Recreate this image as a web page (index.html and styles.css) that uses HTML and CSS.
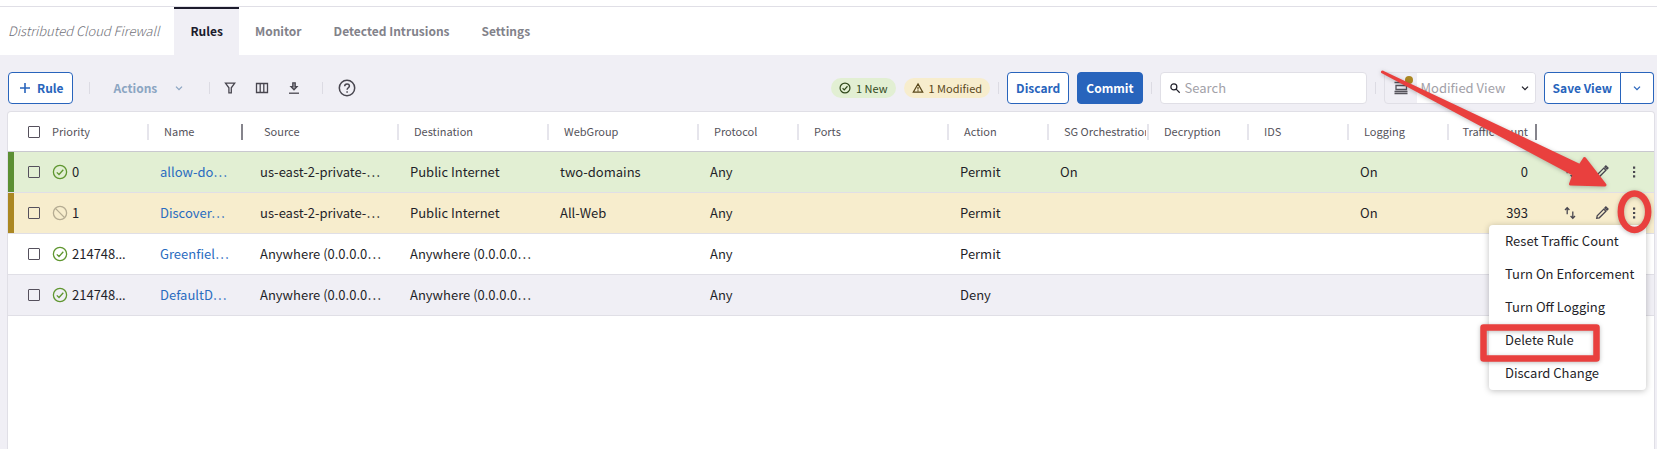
FILE: index.html
```html
<!DOCTYPE html>
<html lang="en">
<head>
<meta charset="utf-8">
<meta name="viewport" content="width=device-width, initial-scale=1">
<title>Distributed Cloud Firewall</title>
<link rel="stylesheet" href="styles.css">
</head>
<body>
<svg class="sprite" aria-hidden="true">
  <symbol id="i-check" viewBox="0 0 16 16"><circle cx="8" cy="8" r="6.6"/><path d="M4.8 8.4l2.2 2.1 4.3-4.8"/></symbol>
  <symbol id="i-block" viewBox="0 0 16 16"><circle cx="8" cy="8" r="6.6"/><path d="M3.4 3.4l9.2 9.2"/></symbol>
  <symbol id="i-caret" viewBox="0 0 16 16"><path d="M5 6.6l3 3 3-3"/></symbol>
  <symbol id="i-swap" viewBox="0 0 16 16"><path d="M5.2 9.2V3M3 5l2.2-2.4L7.4 5M10.800 6.600v6.400M8.600 11l2.200 2.400L13 11"/></symbol>
  <symbol id="i-pencil" viewBox="0 0 16 16"><path d="M2.700 13.300l.5-2.600 6.600-6.600 2.100 2.100-6.600 6.600zM10.900 3l1-1 2.100 2.100-1 1z"/></symbol>
  <symbol id="i-dots" viewBox="0 0 16 16"><path d="M7 2.500h2.200v2.200H7zM7 6.900h2.200v2.200H7zM7 11.300h2.200v2.200H7z"/></symbol>
</svg>

<header class="topbar">
  <h1 class="title">Distributed Cloud Firewall</h1>
  <nav class="tabs">
    <a class="tab tab-active" href="#rules">Rules</a>
    <a class="tab" href="#monitor">Monitor</a>
    <a class="tab" href="#intrusions">Detected Intrusions</a>
    <a class="tab" href="#settings">Settings</a>
  </nav>
</header>

<main class="page">
  <div class="toolbar">
    <button class="btn btn-rule" type="button"><svg class="icon icon-blue" viewBox="0 0 16 16"><path d="M8 3v10M3 8h10"/></svg>Rule</button>
    <span class="divider divider-wide"></span>
    <button class="actions-btn" type="button" disabled>Actions<svg class="icon"><use href="#i-caret"/></svg></button>
    <span class="divider"></span>
    <div class="tools">
      <button class="tool" type="button" aria-label="Filter"><svg class="icon" viewBox="0 0 16 16"><path d="M3.500 3.200h9.200L9.300 7.800v5H6.900v-5z"/></svg></button>
      <button class="tool" type="button" aria-label="Columns"><svg class="icon" viewBox="0 0 16 16"><path d="M2.500 3.500h11v9h-11zM6.200 3.500v9M9.800 3.500v9"/></svg></button>
      <button class="tool" type="button" aria-label="Download"><svg class="icon" viewBox="0 0 16 16"><path d="M3 13.200h10"/><path class="soft" d="M6.800 2.800h2.400v3.800h1.800L8 9.800 5 6.600h1.800z"/></svg></button>
    </div>
    <span class="divider"></span>
    <button class="tool tool-help" type="button" aria-label="Help"><svg class="icon icon-help" viewBox="0 0 20 20"><circle cx="10" cy="10" r="7.700"/><path d="M7.700 8.200c0-3 4.700-3 4.700-.2 0 1.700-2.300 1.900-2.300 3.800M10.100 13.300v1.500"/></svg></button>

    <span class="spacer"></span>

    <span class="badge badge-new"><svg class="icon icon-small"><use href="#i-check"/></svg>1 New</span>
    <span class="badge badge-modified"><svg class="icon icon-small" viewBox="0 0 16 16"><path d="M8 2.500l6.300 11H1.700zM8 6.500v3.500M8 11v1.300"/></svg>1 Modified</span>
    <span class="divider"></span>
    <button class="btn" type="button">Discard</button>
    <button class="btn btn-primary" type="button">Commit</button>
    <span class="divider"></span>
    <label class="search">
      <svg class="icon icon-small" viewBox="0 0 16 16"><circle cx="6.500" cy="6.500" r="4"/><path d="M9.500 9.500l4.800 4.800"/></svg>
      <input type="search" placeholder="Search" aria-label="Search">
    </label>
    <span class="divider"></span>
    <div class="view">
      <span class="view-icon"><svg class="icon" viewBox="0 0 16 16"><path d="M1.500 2.500h13M3 5.500h10.500v4H3zM1.500 11.500h13M1.500 13.500h13"/></svg><span class="view-dot"></span></span>
      <select class="view-select" aria-label="View"><option>Modified View</option></select>
      <svg class="icon view-caret"><use href="#i-caret"/></svg>
    </div>
    <div class="split">
      <button class="btn split-main" type="button">Save View</button>
      <button class="btn split-more" type="button" aria-label="More save options"><svg class="icon"><use href="#i-caret"/></svg></button>
    </div>
  </div>

  <section class="panel">
    <table class="grid">
      <colgroup>
        <col class="c-check"><col class="c-s"><col class="c-s"><col class="c-l"><col class="c-l"><col class="c-l"><col class="c-s"><col class="c-l"><col class="c-s"><col class="c-s"><col class="c-s"><col class="c-s"><col class="c-s"><col class="c-s"><col>
      </colgroup>
      <thead>
        <tr>
          <th class="check plain"><input type="checkbox" aria-label="Select all rules"></th>
          <th class="priority">Priority</th>
          <th class="pinned">Name</th>
          <th>Source</th>
          <th>Destination</th>
          <th>WebGroup</th>
          <th>Protocol</th>
          <th>Ports</th>
          <th>Action</th>
          <th><span class="clip">SG Orchestration</span></th>
          <th>Decryption</th>
          <th>IDS</th>
          <th>Logging</th>
          <th class="count pinned-end">Traffic Count</th>
          <th class="plain"></th>
        </tr>
      </thead>
      <tbody>
        <tr class="row-new">
          <td class="check"><input type="checkbox" aria-label="Select rule 0"></td>
          <td class="priority"><span class="status"><svg class="icon icon-on"><use href="#i-check"/></svg>0</span></td>
          <td><a href="#rule">allow-do…</a></td>
          <td>us-east-2-private-…</td><td>Public Internet</td><td>two-domains</td><td>Any</td><td></td><td>Permit</td><td>On</td><td></td><td></td><td>On</td>
          <td class="count">0</td>
          <td class="row-actions"><div class="acts">
            <button class="act" type="button" aria-label="Move"><svg class="icon"><use href="#i-swap"/></svg></button>
            <button class="act" type="button" aria-label="Edit"><svg class="icon"><use href="#i-pencil"/></svg></button>
            <button class="act" type="button" aria-label="More"><svg class="icon icon-dots"><use href="#i-dots"/></svg></button>
          </div></td>
        </tr>
        <tr class="row-modified">
          <td class="check"><input type="checkbox" aria-label="Select rule 1"></td>
          <td class="priority"><span class="status"><svg class="icon icon-off"><use href="#i-block"/></svg>1</span></td>
          <td><a href="#rule">Discover…</a></td>
          <td>us-east-2-private-…</td><td>Public Internet</td><td>All-Web</td><td>Any</td><td></td><td>Permit</td><td></td><td></td><td></td><td>On</td>
          <td class="count">393</td>
          <td class="row-actions"><div class="acts">
            <button class="act" type="button" aria-label="Move"><svg class="icon"><use href="#i-swap"/></svg></button>
            <button class="act" type="button" aria-label="Edit"><svg class="icon"><use href="#i-pencil"/></svg></button>
            <button class="act" type="button" aria-label="More" aria-expanded="true"><svg class="icon icon-dots"><use href="#i-dots"/></svg></button>
            <div class="menu" role="menu">
              <button class="menu-item" role="menuitem" type="button">Reset Traffic Count</button>
              <button class="menu-item" role="menuitem" type="button">Turn On Enforcement</button>
              <button class="menu-item" role="menuitem" type="button">Turn Off Logging</button>
              <button class="menu-item" role="menuitem" type="button">Delete Rule</button>
              <button class="menu-item" role="menuitem" type="button">Discard Change</button>
            </div>
          </div></td>
        </tr>
        <tr>
          <td class="check"><input type="checkbox" aria-label="Select Greenfield rule"></td>
          <td class="priority"><span class="status"><svg class="icon icon-on"><use href="#i-check"/></svg><span>214748<span class="more">…</span></span></span></td>
          <td><a href="#rule">Greenfiel…</a></td>
          <td>Anywhere (0.0.0.0…</td><td>Anywhere (0.0.0.0…</td><td></td><td>Any</td><td></td><td>Permit</td><td></td><td></td><td></td><td></td><td></td><td></td>
        </tr>
        <tr class="row-alt">
          <td class="check"><input type="checkbox" aria-label="Select default rule"></td>
          <td class="priority"><span class="status"><svg class="icon icon-on"><use href="#i-check"/></svg><span>214748<span class="more">…</span></span></span></td>
          <td><a href="#rule">DefaultD…</a></td>
          <td>Anywhere (0.0.0.0…</td><td>Anywhere (0.0.0.0…</td><td></td><td>Any</td><td></td><td>Deny</td><td></td><td></td><td></td><td></td><td></td><td></td>
        </tr>
      </tbody>
    </table>
  </section>
</main>

<svg class="callouts" viewBox="1357 0 300 449" aria-hidden="true">
  <path class="callout-fill" d="M1382.500 72L1574 174.500 1570.500 184 1605 185 1584.500 158.500 1580 165.500z"/>
  <ellipse class="callout-line" cx="1634.500" cy="211.700" rx="13.700" ry="18.300"/>
  <rect class="callout-line" x="1483.500" y="327.500" width="113" height="31"/>
</svg>
</body>
</html>
```
FILE: styles.css
```css
* { box-sizing: border-box; }

body {
  margin: 0;
  min-height: 100vh;
  display: flex;
  flex-direction: column;
  position: relative;
  background: #fff;
  color: #1f1f29;
  font: 13px/20px "Noto Sans CJK SC", "Noto Sans", sans-serif;
}

button, input, select { font: inherit; color: inherit; margin: 0; }
button { padding: 0; border: 0; background: none; cursor: pointer; }
a { color: #2a6cc0; text-decoration: none; }

.sprite { position: absolute; width: 0; height: 0; }

.icon {
  width: 16px;
  height: 16px;
  flex: none;
  display: block;
  fill: none;
  stroke: currentColor;
  stroke-width: 1.3;
}
.icon-small { width: 12px; height: 12px; stroke-width: 1.6; }
.icon-blue { stroke-width: 1.6; }
.icon-help { width: 20px; height: 20px; stroke-width: 1.5; }
.icon-dots { fill: currentColor; stroke: none; }
.soft { fill: #a5a3ab; }
.icon-on { color: #5f962f; }
.icon-off { color: #b5ac93; }

.topbar {
  margin-top: 6px;
  border-top: 1px solid #e0dfe6;
  display: flex;
  height: 49px;
}
.title {
  margin: 0;
  padding: 0 15px 0 8px;
  font-size: 13px;
  line-height: 48px;
  font-style: italic;
  font-weight: 300;
  color: #6f6f77;
}
.tabs { display: flex; }
.tab {
  padding: 0 16px;
  line-height: 44px;
  border-top: 2px solid transparent;
  font-size: 12px;
  font-weight: 700;
  color: #82828a;
}
.tab-active {
  background: #f0eff5;
  border-color: #1c1b2c;
  color: #1c1b2c;
}

.page {
  flex: 1;
  display: flex;
  flex-direction: column;
  background: #f0eff5;
}
.toolbar {
  display: flex;
  align-items: center;
  gap: 8px;
  padding: 17px 3px 7px 8px;
}
.spacer { flex: 1; }
.divider { width: 1px; height: 12px; background: #dcdbe3; }
.divider-wide { margin: 0 8px; }

.btn {
  height: 32px;
  padding: 0 8px;
  border: 1px solid #2864bc;
  border-radius: 4px;
  background: #fff;
  color: #2864bc;
  font-size: 12px;
  font-weight: 700;
  white-space: nowrap;
}
.btn-primary { background: #2864bc; color: #fff; }
.btn-rule { display: flex; align-items: center; gap: 4px; }

.actions-btn {
  display: flex;
  align-items: center;
  gap: 14px;
  padding: 0 14px 0 8px;
  color: #8ba5c2;
  font-size: 12px;
  font-weight: 700;
}
.tools { display: flex; gap: 16px; padding: 0 12px 0 4px; }
.tool { color: #48464f; }
.tool-help { padding-left: 6px; }

.badge {
  display: flex;
  align-items: center;
  gap: 5px;
  height: 20px;
  padding: 0 8px;
  border-radius: 10px;
  font-size: 11px;
  white-space: nowrap;
}
.badge-new { background: #e2efd3; color: #31491c; }
.badge-modified { background: #f7edcd; color: #59471a; }

.search {
  display: flex;
  align-items: center;
  gap: 4px;
  width: 207px;
  height: 32px;
  padding: 0 8px;
  border: 1px solid #e0dfe6;
  border-radius: 4px;
  background: #fff;
}
.search input {
  flex: 1;
  min-width: 0;
  padding: 0;
  border: 0;
  outline: 0;
  background: none;
}
.search input::placeholder { color: #a2a1a8; opacity: 1; }

.view {
  display: grid;
  grid-template-columns: 32px 118px;
  align-items: center;
  height: 32px;
  border: 1px solid #e0dfe6;
  border-radius: 4px;
}
.view-icon { position: relative; display: grid; place-items: center; color: #55535b; }
.view-dot {
  position: absolute;
  top: -4px;
  right: 4px;
  width: 8px;
  height: 8px;
  border-radius: 50%;
  background: #ab8722;
}
.view-select {
  grid-area: 1 / 2;
  height: 30px;
  padding: 0 4px;
  border: 0;
  border-radius: 0 3px 3px 0;
  appearance: none;
  background: #fff;
  color: #a2a1a8;
}
.view-caret { grid-area: 1 / 2; justify-self: end; margin-right: 2px; pointer-events: none; }

.split { display: flex; }
.split-main { border-radius: 4px 0 0 4px; }
.split-more { border-radius: 0 4px 4px 0; border-left: 0; }

.panel {
  flex: 1;
  margin: 0 2px 0 7px;
  border: 1px solid #e0dfe6;
  border-bottom: 0;
  border-radius: 4px 4px 0 0;
  background: #fff;
}
.grid { width: 100%; table-layout: fixed; border-spacing: 0; }
.c-check { width: 41px; }
.c-s { width: 100px; }
.c-l { width: 150px; }

th {
  position: relative;
  height: 40px;
  padding: 0 3px 2px 15px;
  border-bottom: 1px solid #c9c8cf;
  font-size: 11px;
  font-weight: 400;
  color: #55535b;
  text-align: left;
  white-space: nowrap;
}
th::after {
  content: "";
  position: absolute;
  top: 12px;
  right: 0;
  width: 2px;
  height: 16px;
  background: #e6e5ec;
}
.plain::after { display: none; }
.pinned::after { right: 6px; background: #85848c; }
.pinned-end::after { right: 12px; background: #85848c; }
.clip { display: block; overflow: hidden; }

td {
  height: 41px;
  padding: 0 11px;
  border-bottom: 1px solid #e0dfe6;
  white-space: nowrap;
}
th.check, td.check { padding: 0 0 0 20px; }
th.priority { padding-left: 3px; }
td.priority { padding: 0 0 0 3px; }
th.count { text-align: right; padding: 0 21px 2px 0; }
td.count { text-align: right; padding: 0 21px 0 0; }
td.row-actions { padding: 0 0 0 5px; }

.row-new td { background: #e2efd3; }
.row-modified td { background: #f7edcd; }
.row-alt td { background: #f0eff5; }
.row-new .check { box-shadow: inset 6px 0 #5c8f33; }
.row-modified .check { box-shadow: inset 6px 0 #ab8722; }

input[type="checkbox"] {
  display: block;
  width: 12px;
  height: 12px;
  border: 1px solid #55505c;
  border-radius: 1px;
  appearance: none;
}
.status { display: flex; align-items: center; gap: 4px; }
.more { font-family: "Noto Sans", sans-serif; line-height: 1; }

.acts { position: relative; display: flex; }
.act { display: grid; place-items: center; width: 32px; height: 32px; color: #48464f; }

.menu {
  position: absolute;
  z-index: 1;
  top: 28px;
  right: 8px;
  display: flex;
  flex-direction: column;
  width: 157px;
  border-radius: 4px;
  background: #fff;
  box-shadow: 0 1px 6px rgba(0, 0, 0, 0.25);
}
.menu-item { height: 33px; padding: 0 16px 2px; text-align: left; white-space: nowrap; }

.callouts {
  position: absolute;
  z-index: 2;
  top: 0;
  right: 0;
  width: 300px;
  height: 449px;
  pointer-events: none;
  filter: drop-shadow(0 1px 2px rgba(0, 0, 0, 0.25));
}
.callout-fill { fill: #e9403e; stroke: #e9403e; stroke-width: 3; stroke-linejoin: round; }
.callout-line { fill: none; stroke: #e9403e; stroke-width: 6.500; stroke-linejoin: round; }
```
